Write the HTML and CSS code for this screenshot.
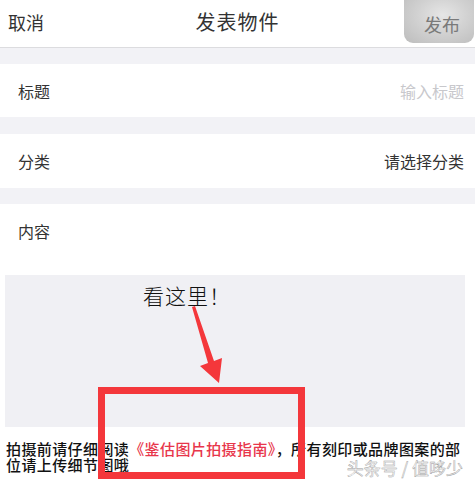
FILE: index.html
```html
<!DOCTYPE html>
<html lang="zh-CN">
<head>
  <meta charset="UTF-8" />
  <meta name="viewport" content="width=device-width, initial-scale=1.0"/>
  <title>发表物件</title>
  <link rel="stylesheet" href="styles.css">
</head>
<body>
  <div class="header">
    <a class="cancel" href="#">取消</a>
    <div class="title">发表物件</div>
    <div class="publish-wrap"><button class="publish">发布</button></div>
  </div>

  <div class="row row-title">
    <span class="label">标题</span>
    <span class="placeholder">输入标题</span>
  </div>

  <div class="row row-cat">
    <span class="label">分类</span>
    <span class="value">请选择分类</span>
  </div>

  <div class="content">
    <div class="label content-label">内容</div>
    <div class="photo-box">
      <div class="look">看这里！</div>
      <svg class="arrow" width="230" height="120" viewBox="0 0 230 120">
        <polygon points="187,32 190,31 209,86 217,83 214,108 195,91 203,88" fill="#f4373b"/>
      </svg>
    </div>
    <p class="tip">拍摄前请仔细阅读<span class="guide">《鉴估图片拍摄指南》</span>，所有刻印或品牌图案的部位请上传细节图哦</p>
    <div class="highlight"></div>
    <div class="watermark">头条号 / 值哆少</div>
  </div>
</body>
</html>
```

FILE: styles.css
```css
* { box-sizing: border-box; }

body {
  margin: 0;
  background: #f2f2f6;
  font-family: "Noto Sans CJK SC", "Noto Sans", sans-serif;
  color: #333;
  overflow: hidden;
}

.header {
  display: grid;
  grid-template-columns: 1fr auto 1fr;
  align-items: start;
  height: 48px;
  background: #fff;
  border-bottom: 1px solid #dcdcdf;
}

.cancel {
  padding: 9px 0 0 8px;
  font-size: 18px;
  line-height: 26px;
  color: #333;
  text-decoration: none;
}

.title {
  padding-top: 8px;
  font-size: 20px;
  line-height: 28px;
  color: #333;
  letter-spacing: 1px;
}

.publish-wrap {
  display: flex;
  justify-content: flex-end;
}

.publish {
  width: 70px;
  height: 43px;
  margin-right: 1px;
  padding: 4px 0 0 6px;
  border: none;
  border-radius: 0 0 9px 9px;
  background: radial-gradient(ellipse at 55% 35%, #e6e6e6 0%, #d2d2d2 45%, #bcbcbc 100%);
  font-family: inherit;
  font-size: 18px;
  color: #7a7a7a;
}

.row {
  display: flex;
  justify-content: space-between;
  align-items: center;
  padding: 0 11px 0 18px;
  background: #fff;
}

.row-title {
  height: 53px;
  margin-top: 16px;
}

.row-cat {
  height: 54px;
  margin-top: 17px;
}

.label {
  font-size: 16px;
  color: #333;
}

.placeholder {
  font-size: 16px;
  color: #c8c8cc;
}

.value {
  font-size: 16px;
  color: #333;
}

.content {
  position: relative;
  margin-top: 16px;
  height: 280px;
  background: #fff;
}

.content-label {
  padding: 16px 0 0 18px;
  line-height: 22px;
}

.photo-box {
  position: relative;
  height: 152px;
  margin: 33px 10px 0 5px;
  padding: 8px 0 0 138px;
  background: #f0f0f4;
}

.look {
  font-size: 21px;
  line-height: 24px;
  color: #111;
  font-weight: 300;
  letter-spacing: 1px;
}

.arrow {
  position: absolute;
  left: 0;
  top: 0;
}

.tip {
  width: 472px;
  margin: 14px 0 0;
  padding-left: 6px;
  font-size: 15px;
  line-height: 16px;
  color: #111;
  font-weight: 500;
  letter-spacing: 0.4px;
}

.guide {
  color: #e8364b;
}

.highlight {
  position: absolute;
  left: 98px;
  top: 183px;
  width: 207px;
  height: 92px;
  border: 7px solid #f4373b;
}

.watermark {
  position: absolute;
  right: 12px;
  top: 254px;
  font-size: 17px;
  line-height: 20px;
  color: #f6f6f6;
  -webkit-text-stroke: 0.4px #9a9a9a;
}
```
